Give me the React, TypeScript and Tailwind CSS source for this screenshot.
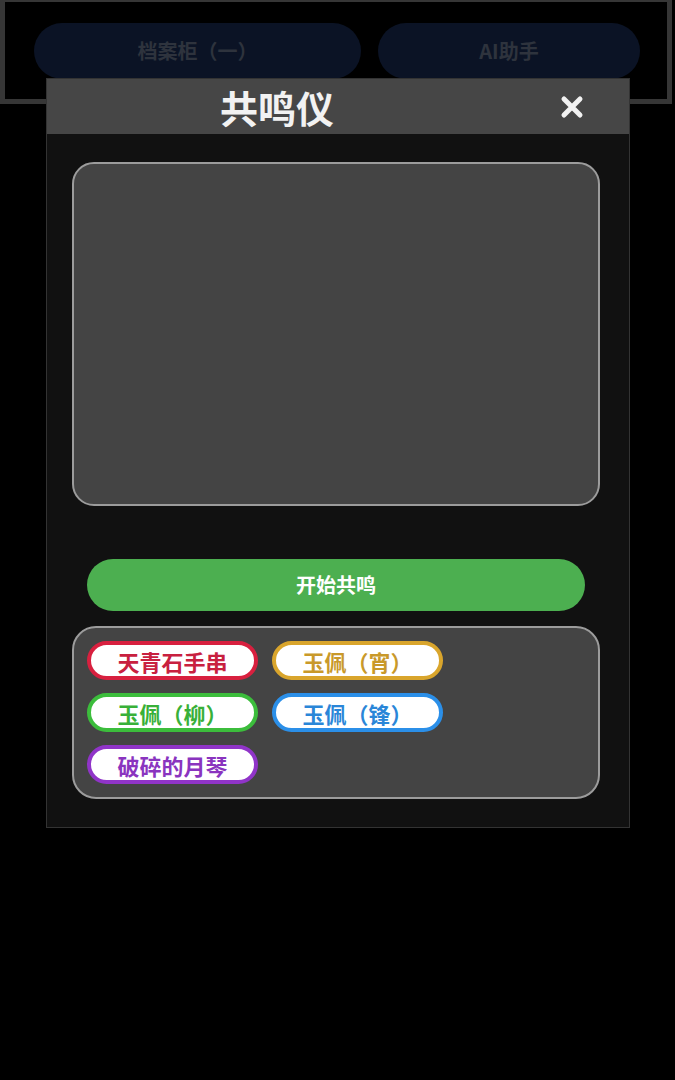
const tags = [
  { name: "天青石手串", color: "border-[#d8203f] text-[#c8203f]" },
  { name: "玉佩（宵）", color: "border-[#d9a52c] text-[#c9992a]" },
  { name: "玉佩（柳）", color: "border-[#3cbd3c] text-[#38b038]" },
  { name: "玉佩（锋）", color: "border-[#2b8fe8] text-[#2a86d8]" },
  { name: "破碎的月琴", color: "border-[#9034c8] text-[#8a34bf]" },
];

export default function App() {
  return (
    <div
      className="relative flex min-h-screen w-[675px] flex-col bg-black"
      style={{ fontFamily: '"Noto Sans CJK SC", "Noto Sans", sans-serif' }}
    >
      {/* Top nav */}
      <div className="-mt-[3px] flex h-[107px] w-[672px] items-center gap-[17px] border-[5px] border-[#363636] bg-black pl-[29px]">
        <button className="flex h-[56px] w-[327px] items-center justify-center rounded-full bg-[#0b1325] text-[20px] font-bold text-[#2e333d]">
          档案柜（一）
        </button>
        <button className="flex h-[56px] w-[262px] items-center justify-center rounded-full bg-[#0b1325] text-[20px] font-bold text-[#2e333d]">
          AI助手
        </button>
      </div>

      {/* Modal */}
      <div className="absolute left-[46px] top-[78px] w-[584px] border border-[#333] bg-[#111]">
        <div className="flex h-[55px] items-center bg-[#464646]">
          <h1 className="ml-[173px] text-[38px] font-bold leading-none text-[#f2f2f2]">共鸣仪</h1>
          <button className="ml-[226px] flex h-[24px] w-[24px] items-center justify-center">
            <svg viewBox="0 0 24 24" className="h-[24px] w-[24px]">
              <path d="M4 4L20 20M20 4L4 20" stroke="#f2f2f2" strokeWidth="5" strokeLinecap="round" />
            </svg>
          </button>
        </div>

        <div className="px-[25px] pb-[28px] pt-[28px]">
          {/* Display area */}
          <div className="h-[344px] w-[528px] rounded-[22px] border-2 border-[#9c9c9c] bg-[#444]" />

          {/* Start button */}
          <button className="mt-[53px] ml-[15px] flex h-[52px] w-[498px] items-center justify-center rounded-full bg-[#4caf50] text-[20px] font-bold text-white">
            开始共鸣
          </button>

          {/* Items */}
          <div className="mt-[15px] flex w-[528px] flex-wrap gap-x-[14px] gap-y-[13px] rounded-[24px] border-2 border-[#9c9c9c] bg-[#444] p-[13px] pr-[150px]">
            {tags.map((t) => (
              <div
                key={t.name}
                className={`flex h-[39px] w-[171px] items-center justify-center rounded-full border-4 bg-white text-[22px] font-bold leading-none ${t.color}`}
              >
                {t.name}
              </div>
            ))}
          </div>
        </div>
      </div>
    </div>
  );
}
